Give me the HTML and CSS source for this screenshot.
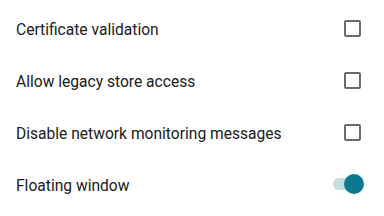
FILE: index.html
```html
<!DOCTYPE html>
<html>
<head>
<meta charset="utf-8">
<link rel="stylesheet" href="styles.css">
</head>
<body>
<div class="list">
  <div class="row">
    <span class="label">Certificate validation</span>
    <span class="checkbox"></span>
  </div>
  <div class="row">
    <span class="label">Allow legacy store access</span>
    <span class="checkbox"></span>
  </div>
  <div class="row">
    <span class="label">Disable network monitoring messages</span>
    <span class="checkbox"></span>
  </div>
  <div class="row">
    <span class="label">Floating window</span>
    <span class="switch"><span class="track"></span><span class="thumb"></span></span>
  </div>
</div>
</body>
</html>
```
FILE: styles.css
```css
html, body {
  margin: 0;
  padding: 0;
  background: #ffffff;
}
body {
  font-family: Roboto, "Liberation Sans", sans-serif;
  width: 384px;
  height: 216px;
  overflow: hidden;
}
.list {
  display: flex;
  flex-direction: column;
  padding-top: 4px;
}
.row {
  height: 52px;
  display: flex;
  align-items: center;
  justify-content: space-between;
  padding: 0 15px 0 16px;
}
.label {
  font-size: 15.6px;
  color: #202020;
}
.checkbox {
  width: 13px;
  height: 13px;
  border: 2px solid #6b6b6b;
  border-radius: 2px;
  margin-right: 8px;
  margin-top: -3px;
}
.switch {
  position: relative;
  width: 31px;
  height: 20px;
  margin-right: 5px;
  margin-top: -4px;
}
.track {
  position: absolute;
  left: 0;
  top: 4px;
  width: 28px;
  height: 12px;
  border-radius: 6px;
  background: #c3dde3;
}
.thumb {
  position: absolute;
  right: 0;
  top: 0;
  width: 20px;
  height: 20px;
  border-radius: 50%;
  background: #0b7a8f;
}
```
